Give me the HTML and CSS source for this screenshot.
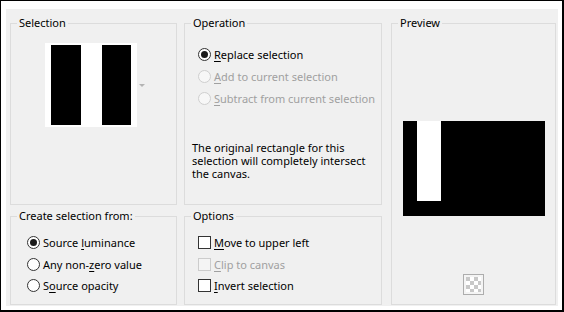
FILE: index.html
```html
<!DOCTYPE html>
<html lang="en">
<head>
  <meta charset="UTF-8">
  <title>Selection from Mask</title>
  <link rel="stylesheet" href="styles.css">
</head>
<body>
  <div class="window">
    <div class="panel">
      <!-- source thumbnail -->
      <fieldset class="group sel">
        <legend>Selection</legend>
        <div class="thumb-row">
          <div class="thumb"><span class="bar"></span><span class="bar bar-r"></span></div>
          <span class="drop"></span>
        </div>
      </fieldset>

      <fieldset class="group op">
        <legend>Operation</legend>
        <div class="list list-op">
          <label class="opt"><span class="radio on"></span><span><u>R</u>eplace selection</span></label>
          <label class="opt off"><span class="radio"></span><span><u>A</u>dd to current selection</span></label>
          <label class="opt off"><span class="radio"></span><span><u>S</u>ubtract from current selection</span></label>
        </div>
        <p class="note">The original rectangle for this selection will completely intersect the canvas.</p>
      </fieldset>

      <fieldset class="group preview">
        <legend>Preview</legend>
        <div class="pv"><span class="pv-bar"></span></div>
        <span class="pv-btn">
          <svg width="21" height="21" viewBox="0 0 21 21">
            <defs>
              <pattern id="chk" width="8" height="8" patternUnits="userSpaceOnUse" x="3" y="3">
                <rect width="8" height="8" fill="#fff"/>
                <rect width="4" height="4" fill="#c8c8c8"/>
                <rect x="4" y="4" width="4" height="4" fill="#c8c8c8"/>
              </pattern>
            </defs>
            <rect x="0.5" y="0.5" width="20" height="20" fill="#f4f4f4" stroke="#adadad"/>
            <rect x="3" y="3" width="15" height="15" fill="url(#chk)"/>
          </svg>
        </span>
      </fieldset>

      <fieldset class="group src">
        <legend>Create selection from:</legend>
        <div class="list list-src">
          <label class="opt"><span class="radio on"></span><span>Source <u>l</u>uminance</span></label>
          <label class="opt"><span class="radio"></span><span>Any non-<u>z</u>ero value</span></label>
          <label class="opt"><span class="radio"></span><span>S<u>o</u>urce opacity</span></label>
        </div>
      </fieldset>

      <fieldset class="group options">
        <legend>Options</legend>
        <div class="list list-opts">
          <label class="opt"><span class="check"></span><span><u>M</u>ove to upper left</span></label>
          <label class="opt off"><span class="check"></span><span><u>C</u>lip to canvas</span></label>
          <label class="opt"><span class="check"></span><span><u>I</u>nvert selection</span></label>
        </div>
      </fieldset>
    </div>
  </div>
</body>
</html>
```

FILE: styles.css
```css
body { margin: 0; background: #fff; font-family: "Noto Sans", "Open Sans", sans-serif; font-size: 11px; color: #000; }
.window { width: 564px; height: 312px; box-sizing: border-box; border: 1px solid #000; border-right-width: 2px; border-bottom-width: 2px; padding: 8px 4px 4px 5px; background: #fff; }
.panel { height: 297px; box-sizing: border-box; background: #f0f0f0; padding: 7px 0 0 4px; display: grid; grid-template-columns: 167px 198px 167px; grid-template-rows: 189px 96px; column-gap: 7px; row-gap: 4px; }

.group { margin: 0; padding: 0; border: 1px solid #dcdcdc; min-width: 0; display: flex; flex-direction: column; }
.group legend { margin-left: 6px; padding: 0 2px; line-height: 14px; }
.sel { grid-column: 1; grid-row: 1; }
.op { grid-column: 2; grid-row: 1; }
.preview { grid-column: 3; grid-row: 1 / 3; margin-left: 2px; align-items: center; }
.src { grid-column: 1; grid-row: 2; }
.options { grid-column: 2; grid-row: 2; }

/* selection thumbnail */
.thumb-row { display: flex; align-items: center; margin: 13px 0 0 34px; }
.thumb { width: 92px; height: 84px; box-sizing: border-box; background: #fff; padding: 2px 6px; display: flex; }
.bar { width: 30px; background: #000; }
.bar-r { width: 29px; margin-left: 21px; }
.drop { width: 0; height: 0; margin-left: 2px; border-left: 3px solid transparent; border-right: 3px solid transparent; border-top: 3px solid #b4b4b4; }

/* radio & check lists */
.list { display: flex; flex-direction: column; }
.list-op { margin: 13px 0 0 13px; }
.list-src { margin: 9px 0 0 16px; }
.list-opts { margin: 9px 0 0 13px; }
.opt { display: flex; align-items: center; gap: 3px; height: 22px; white-space: nowrap; }
.list-src .opt, .list-opts .opt { height: 21.5px; }
.opt.off { color: #a0a0a0; }
.radio { width: 13px; height: 13px; box-sizing: border-box; border-radius: 50%; border: 1px solid #333; background: #fff; display: inline-flex; align-items: center; justify-content: center; flex: none; }
.radio.on::after { content: ""; width: 7px; height: 7px; border-radius: 50%; background: #1a1a1a; }
.off .radio { border-color: #cfcfcf; background: #f7f7f7; }
.check { width: 13px; height: 13px; box-sizing: border-box; border: 1px solid #333; background: #fff; flex: none; }
.off .check { border-color: #cccccc; background: #f4f4f4; }
.opt u { text-underline-offset: 2px; }

.note { margin: 32px 0 0 7px; line-height: 13px; width: 180px; }

/* preview */
.pv { width: 142px; height: 95px; background: #000; margin-top: 91px; padding-left: 14px; box-sizing: border-box; }
.pv-bar { display: block; width: 24px; height: 80px; background: #fff; }
.pv-btn { margin-top: auto; margin-bottom: 9px; height: 21px; }
.pv-btn svg { display: block; }
```
